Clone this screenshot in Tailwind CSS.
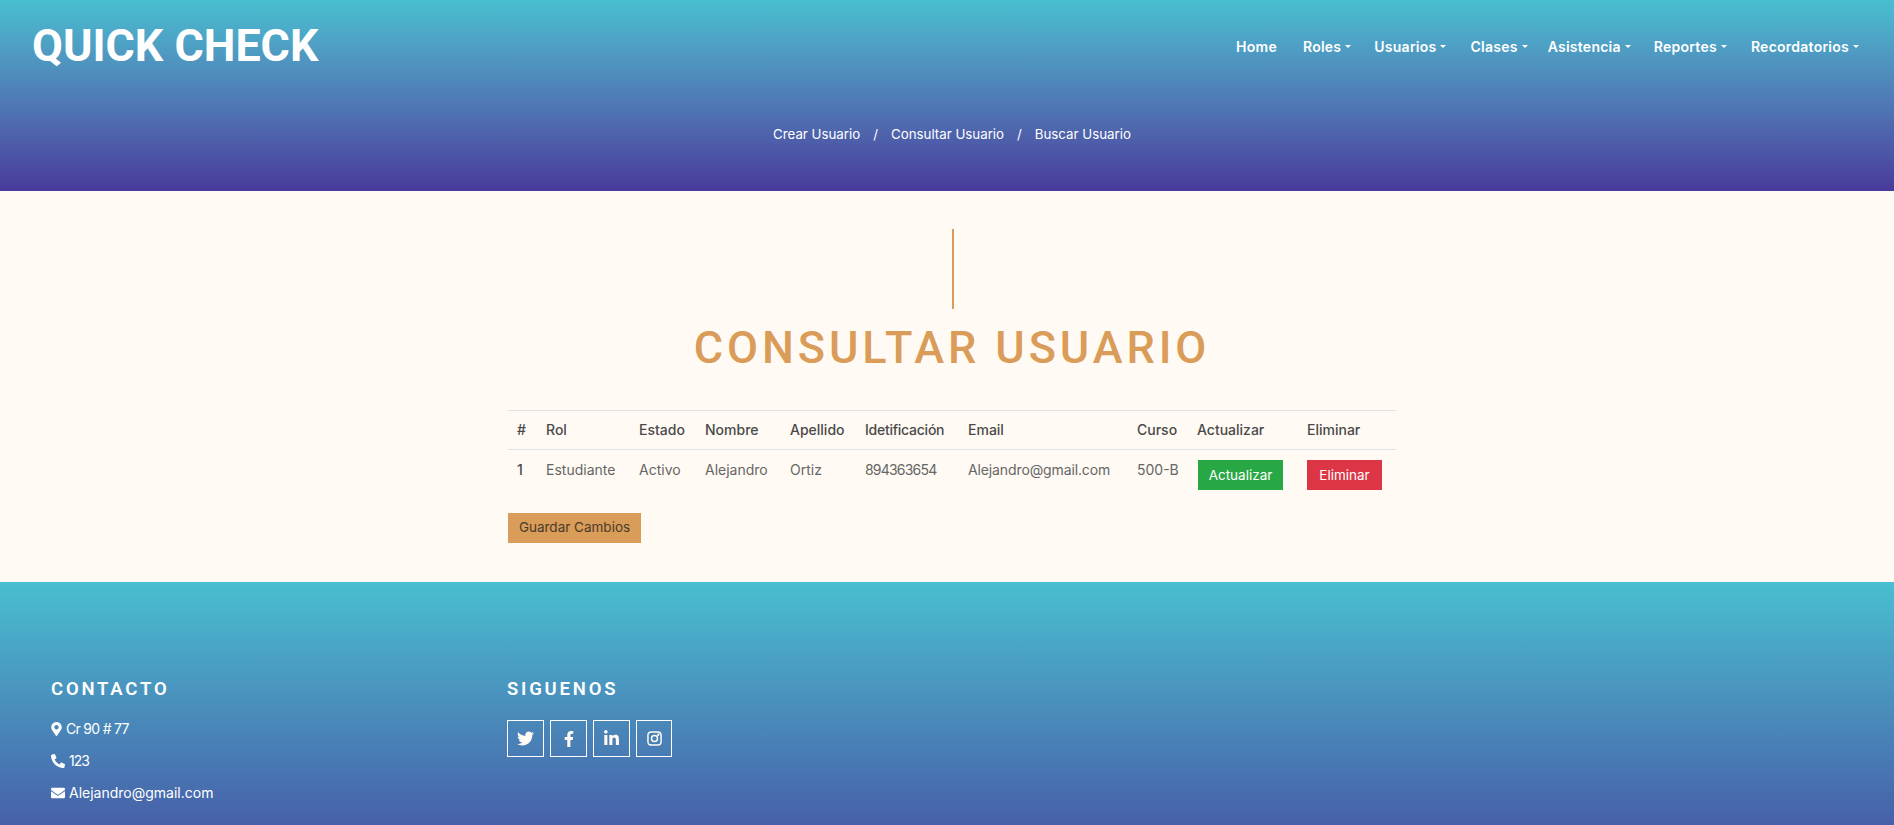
<!DOCTYPE html>
<html lang="es">
<head>
    <meta charset="UTF-8">
    <title>Quick Check | Consultar Usuario</title>
    <script src="https://cdn.jsdelivr.net/npm/@tailwindcss/browser@4"></script>
</head>
<body class="bg-[#fffaf3] font-['Inter',sans-serif]">
    <!-- Header -->
    <header class="h-[191px] bg-linear-to-b from-[#48bfd0] to-[#493a9b] text-white">
        <div class="flex h-[92px] items-center justify-between pl-[32px] pr-[35px]">
            <a href="#" class="font-['Roboto',sans-serif] text-[44.8px] leading-none font-bold">QUICK CHECK</a>
            <nav class="flex items-center text-[14px] font-semibold tracking-[0.25px]">
                <a href="#">Home</a>
                <a href="#" class="ml-[26px] flex items-center gap-[4px]">Roles <span class="h-0 w-0 border-x-[3px] border-t-[3px] border-x-transparent border-t-white"></span></a>
                <a href="#" class="ml-[23px] flex items-center gap-[4px]">Usuarios <span class="h-0 w-0 border-x-[3px] border-t-[3px] border-x-transparent border-t-white"></span></a>
                <a href="#" class="ml-[24px] flex items-center gap-[4px]">Clases <span class="h-0 w-0 border-x-[3px] border-t-[3px] border-x-transparent border-t-white"></span></a>
                <a href="#" class="ml-[20px] flex items-center gap-[4px]">Asistencia <span class="h-0 w-0 border-x-[3px] border-t-[3px] border-x-transparent border-t-white"></span></a>
                <a href="#" class="ml-[23px] flex items-center gap-[4px]">Reportes <span class="h-0 w-0 border-x-[3px] border-t-[3px] border-x-transparent border-t-white"></span></a>
                <a href="#" class="ml-[24px] flex items-center gap-[4px]">Recordatorios <span class="h-0 w-0 border-x-[3px] border-t-[3px] border-x-transparent border-t-white"></span></a>
            </nav>
        </div>
        <div class="mt-[32px] ml-[773px] flex w-[358px] justify-between text-[13.3px] leading-5">
            <a href="#">Crear Usuario</a>
            <span>/</span>
            <a href="#">Consultar Usuario</a>
            <span>/</span>
            <a href="#">Buscar Usuario</a>
        </div>
    </header>

    <!-- Main -->
    <main class="h-[391px] pt-[38px] pl-[508px]">
        <div class="w-[888px]">
            <div class="ml-[444px] h-[80px] w-[2px] bg-[#d99c59]"></div>
            <h1 class="mt-[12px] text-center font-['Roboto',sans-serif] text-[45px] leading-[54px] font-medium tracking-[3.9px] text-[#d99c59]">CONSULTAR USUARIO</h1>
            <table class="mt-[35px] w-[888px] table-fixed border-t border-[#dfe2e3] text-left text-[14px] text-[#666]">
                <thead>
                    <tr class="h-[39px] border-b border-[#dfe2e3] text-[#4a4a4a]">
                        <th class="w-[29px] pb-[2px] pl-[9px] font-[450]">#</th>
                        <th class="w-[93px] pb-[2px] pl-[9px] font-[450]">Rol</th>
                        <th class="w-[66px] pb-[2px] pl-[9px] font-[450]">Estado</th>
                        <th class="w-[85px] pb-[2px] pl-[9px] font-[450]">Nombre</th>
                        <th class="w-[75px] pb-[2px] pl-[9px] font-[450]">Apellido</th>
                        <th class="w-[103px] pb-[2px] pl-[9px] font-[450] tracking-[-0.25px]">Idetificación</th>
                        <th class="w-[169px] pb-[2px] pl-[9px] font-[450]">Email</th>
                        <th class="w-[60px] pb-[2px] pl-[9px] font-[450]">Curso</th>
                        <th class="w-[110px] pb-[2px] pl-[9px] font-[450]">Actualizar</th>
                        <th class="w-[98px] pb-[2px] pl-[9px] font-[450]">Eliminar</th>
                    </tr>
                </thead>
                <tbody>
                    <tr class="h-[49px] align-top">
                        <td class="pt-[9px] pl-[9px] font-[450] text-[#4a4a4a]">1</td>
                        <td class="pt-[9px] pl-[9px]">Estudiante</td>
                        <td class="pt-[9px] pl-[9px]">Activo</td>
                        <td class="pt-[9px] pl-[9px]">Alejandro</td>
                        <td class="pt-[9px] pl-[9px]">Ortiz</td>
                        <td class="pt-[9px] pl-[9px] tracking-[-0.8px]">894363654</td>
                        <td class="pt-[9px] pl-[9px] tracking-[-0.12px]">Alejandro@gmail.com</td>
                        <td class="pt-[9px] pl-[9px]">500-B</td>
                        <td class="pt-[10px] pl-[10px]"><button class="h-[30px] w-[85px] bg-[#28a745] text-[13.5px] text-white">Actualizar</button></td>
                        <td class="pt-[10px] pl-[9px]"><button class="h-[30px] w-[75px] bg-[#dc3545] text-[13.5px] text-white">Eliminar</button></td>
                    </tr>
                </tbody>
            </table>
            <button class="mt-[14px] h-[30px] w-[133px] bg-[#d99c59] text-[13.5px] text-[#4a3b2a]">Guardar Cambios</button>
        </div>
    </main>

    <!-- Footer -->
    <footer class="flex h-[243px] bg-linear-to-b from-[#48bfd0] to-[#4660a8] pt-[97px] text-white">
        <div class="w-[507px] pl-[51px]">
            <h4 class="font-['Roboto',sans-serif] text-[18.5px] leading-5 font-semibold tracking-[2.8px]">CONTACTO</h4>
            <ul class="mt-[20px] flex flex-col gap-[12px] text-[14px] leading-5">
                <li class="flex items-center gap-[4px] tracking-[-0.7px]">
                    <svg class="h-[14px] w-[11px] fill-current" viewBox="0 0 384 512"><path d="M172.268 501.67C26.97 291.031 0 269.413 0 192 0 85.961 85.961 0 192 0s192 85.961 192 192c0 77.413-26.97 99.031-172.268 309.67-9.535 13.774-29.93 13.773-39.464 0zM192 272c44.183 0 80-35.817 80-80s-35.817-80-80-80-80 35.817-80 80 35.817 80 80 80z"/></svg>
                    Cr 90 # 77
                </li>
                <li class="flex items-center gap-[4px] tracking-[-1px]">
                    <svg class="h-[14px] w-[14px] fill-current" viewBox="0 0 512 512"><path d="M497.39 361.8l-112-48a24 24 0 0 0-28 6.9l-49.6 60.6A370.66 370.66 0 0 1 130.6 204.11l60.6-49.6a23.94 23.94 0 0 0 6.9-28l-48-112A24.16 24.16 0 0 0 122.6.61l-104 24A24 24 0 0 0 0 48c0 256.5 207.9 464 464 464a24 24 0 0 0 23.4-18.6l24-104a24.29 24.29 0 0 0-14.01-27.6z"/></svg>
                    123
                </li>
                <li class="flex items-center gap-[4px]">
                    <svg class="h-[14px] w-[14px] fill-current" viewBox="0 0 512 512"><path d="M502.3 190.8c3.9-3.1 9.7-.2 9.7 4.7V400c0 26.5-21.5 48-48 48H48c-26.5 0-48-21.5-48-48V195.6c0-5 5.7-7.8 9.7-4.7 22.4 17.4 52.1 39.5 154.1 113.6 21.1 15.4 56.7 47.8 92.2 47.6 35.7.3 72-32.8 92.3-47.6 102-74.1 131.6-96.3 154-113.7zM256 320c23.2.4 56.6-29.2 73.4-41.4 132.7-96.3 142.8-104.7 173.4-128.7 5.8-4.5 9.2-11.5 9.2-18.9v-19c0-26.5-21.5-48-48-48H48C21.5 64 0 85.5 0 112v19c0 7.4 3.4 14.3 9.2 18.9 30.6 23.9 40.7 32.4 173.4 128.7 16.8 12.2 50.2 41.8 73.4 41.4z"/></svg>
                    Alejandro@gmail.com
                </li>
            </ul>
        </div>
        <div>
            <h4 class="font-['Roboto',sans-serif] text-[18.5px] leading-5 font-semibold tracking-[2.8px]">SIGUENOS</h4>
            <div class="mt-[21px] flex gap-[6px]">
                <a href="#" class="flex h-[37px] w-[37px] items-center justify-center border border-white">
                    <svg class="h-[17px] w-[17px] fill-[#fffaf3]" viewBox="0 0 512 512"><path d="M459.37 151.716c.325 4.548.325 9.097.325 13.645 0 138.72-105.583 298.558-298.558 298.558-59.452 0-114.68-17.219-161.137-47.106 8.447.974 16.568 1.299 25.34 1.299 49.055 0 94.213-16.568 130.274-44.832-46.132-.975-84.792-31.188-98.112-72.772 6.498.974 12.995 1.624 19.818 1.624 9.421 0 18.843-1.3 27.614-3.573-48.081-9.747-84.143-51.98-84.143-102.985v-1.299c13.969 7.797 30.214 12.67 47.431 13.319-28.264-18.843-46.781-51.005-46.781-87.391 0-19.492 5.197-37.36 14.294-52.954 51.655 63.675 129.3 105.258 216.365 109.807-1.624-7.797-2.599-15.918-2.599-24.04 0-57.828 46.782-104.934 104.934-104.934 30.213 0 57.502 12.67 76.67 33.137 23.715-4.548 46.456-13.32 66.599-25.34-7.798 24.366-24.366 44.833-47.431 58.453 21.117-2.273 41.584-8.122 60.426-16.243-14.292 20.791-32.161 39.308-52.628 54.253z"/></svg>
                </a>
                <a href="#" class="flex h-[37px] w-[37px] items-center justify-center border border-white">
                    <svg class="h-[16px] w-[10px] fill-[#fffaf3]" viewBox="0 0 320 512"><path d="M279.14 288l14.22-92.66h-88.91v-60.13c0-25.35 12.42-50.06 52.24-50.06h40.42V6.26S260.43 0 225.36 0c-73.22 0-121.08 44.38-121.08 124.72v70.62H22.89V288h81.39v224h100.17V288z"/></svg>
                </a>
                <a href="#" class="flex h-[37px] w-[37px] items-center justify-center border border-white">
                    <svg class="h-[17px] w-[15px] fill-[#fffaf3]" viewBox="0 0 448 512"><path d="M100.28 448H7.4V148.9h92.88zM53.79 108.1C24.09 108.1 0 83.5 0 53.8a53.79 53.79 0 0 1 107.58 0c0 29.7-24.1 54.3-53.79 54.3zM447.9 448h-92.68V302.4c0-34.7-.7-79.2-48.29-79.2-48.29 0-55.69 37.7-55.69 76.7V448h-92.78V148.9h89.08v40.8h1.3c12.4-23.5 42.69-48.3 87.88-48.3 94 0 111.28 61.9 111.28 142.3V448z"/></svg>
                </a>
                <a href="#" class="flex h-[37px] w-[36px] items-center justify-center border border-white">
                    <svg class="h-[15px] w-[15px] fill-none stroke-[#fffaf3] stroke-[1.6]" viewBox="0 0 16 16"><rect x="1" y="1" width="14" height="14" rx="3.5"/><circle cx="8" cy="8" r="3.2"/><circle cx="12" cy="4" r="0.5" class="fill-[#fffaf3]"/></svg>
                </a>
            </div>
        </div>
    </footer>
</body>
</html>
